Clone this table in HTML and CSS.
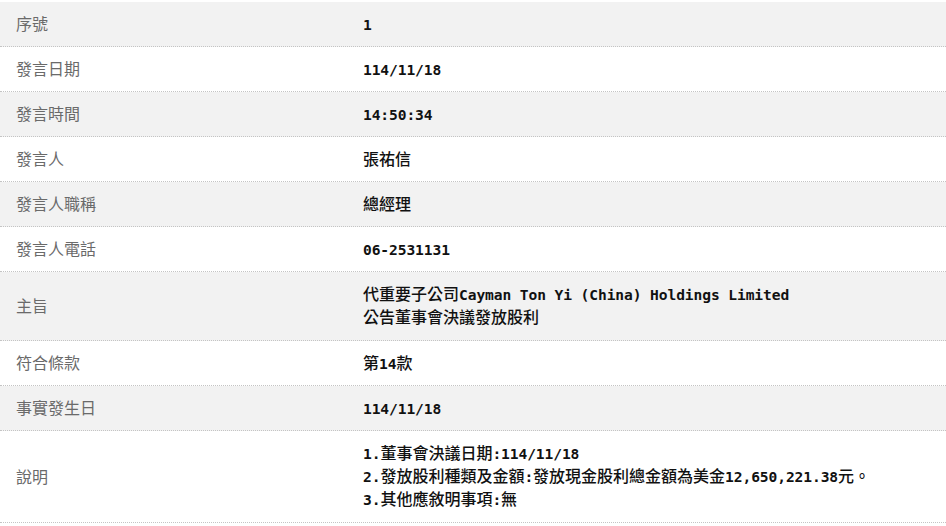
FILE: index.html
```html
<!DOCTYPE html>
<html lang="zh-Hant">
<head>
<meta charset="utf-8">
<link rel="stylesheet" href="styles.css">
</head>
<body>
<div class="table">
  <div class="row alt"><div class="label">序號</div><div class="value"><span class="num">1</span></div></div>
  <div class="row"><div class="label">發言日期</div><div class="value"><span class="num">114/11/18</span></div></div>
  <div class="row alt"><div class="label">發言時間</div><div class="value"><span class="num">14:50:34</span></div></div>
  <div class="row"><div class="label">發言人</div><div class="value">張祐信</div></div>
  <div class="row alt"><div class="label">發言人職稱</div><div class="value">總經理</div></div>
  <div class="row"><div class="label">發言人電話</div><div class="value"><span class="num">06-2531131</span></div></div>
  <div class="row alt"><div class="label">主旨</div><div class="value multi">代重要子公司<span class="num">Cayman Ton Yi (China) Holdings Limited</span><br>公告董事會決議發放股利</div></div>
  <div class="row"><div class="label">符合條款</div><div class="value">第<span class="num">14</span>款</div></div>
  <div class="row alt"><div class="label">事實發生日</div><div class="value"><span class="num">114/11/18</span></div></div>
  <div class="row"><div class="label">說明</div><div class="value multi"><span class="num">1.</span>董事會決議日期<span class="num">:114/11/18</span><br><span class="num">2.</span>發放股利種類及金額<span class="num">:</span>發放現金股利總金額為美金<span class="num">12,650,221.38</span>元。<br><span class="num">3.</span>其他應敘明事項<span class="num">:</span>無</div></div>
</div>
</body>
</html>
```

FILE: styles.css
```css
html, body {
  margin: 0;
  padding: 0;
  background: #fff;
}
body {
  padding-top: 2px;
}
.table {
  display: flex;
  flex-direction: column;
  width: 946px;
}
.row {
  display: grid;
  grid-template-columns: 347px 1fr;
  border-bottom: 1px dotted #c4c4c4;
  background: #fff;
}
.row.alt {
  background: #f2f2f2;
}
.label {
  padding: 10px 16px 12px;
  height: 22px;
  line-height: 22px;
  font-family: "Noto Sans CJK TC", "Noto Sans", sans-serif;
  font-size: 16px;
  color: #6a6a6a;
  display: flex;
  align-items: center;
  align-self: center;
}
.value {
  padding: 10px 16px 12px;
  height: 22px;
  line-height: 22px;
  font-family: "Noto Sans CJK TC", sans-serif;
  font-size: 16px;
  font-weight: 500;
  color: #111;
  white-space: nowrap;
}
.value.multi {
  height: auto;
  line-height: 23px;
}
.num {
  font-family: "DejaVu Sans Mono", monospace;
  font-size: 14.6px;
  font-weight: bold;
  letter-spacing: -0.1px;
  line-height: 14px;
}
```
